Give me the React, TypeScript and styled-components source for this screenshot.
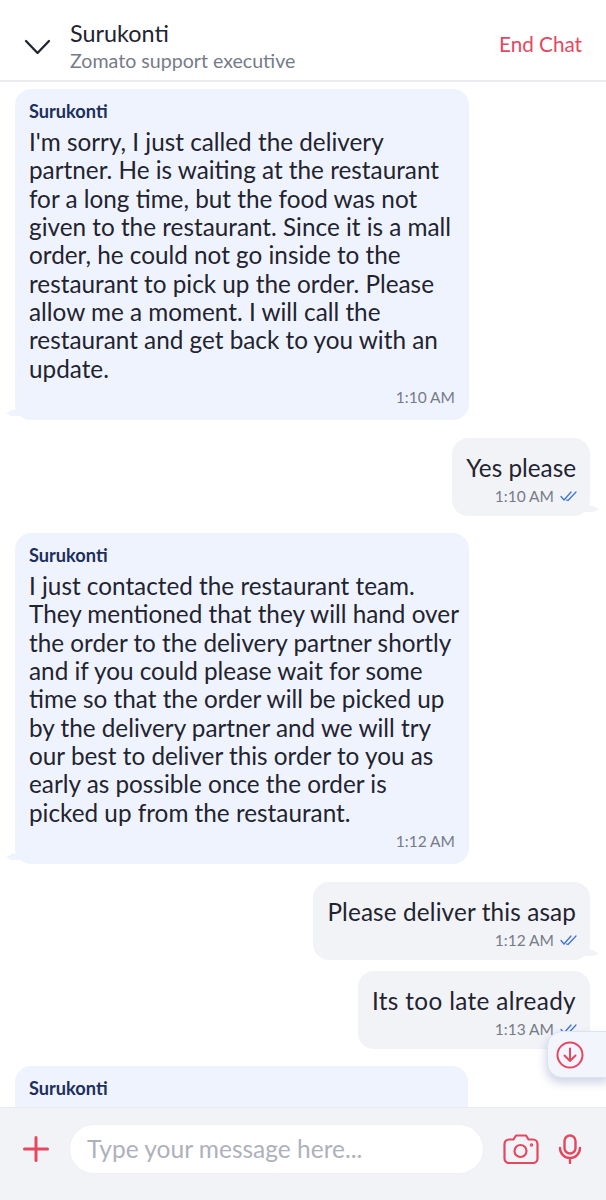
import React from "react";
import styled, { createGlobalStyle } from "styled-components";

const Global = createGlobalStyle`
  html, body { margin: 0; padding: 0; background: #fff; }
  * { box-sizing: border-box; }
`;
const Page = styled.div`
  position: relative; width: 606px; height: 1200px; overflow: hidden; display: flex; flex-direction: column;
  background: #fff; font-family: Lato, "Noto Sans", sans-serif; color: #1f2430;
`;
const Header = styled.header`
  height: 82px; flex: none; display: flex; align-items: center; padding: 0 24px 0 24px; border-bottom: 2px solid #ebecef;
`;
const Back = styled.svg`width: 27px; height: 18px; flex: none; margin-right: 19px; margin-top: 14px;`;
const Titles = styled.div`flex: 1; display: flex; flex-direction: column; gap: 1px; padding-top: 12px;`;
const Title = styled.div`font-size: 23.4px; line-height: 28px; color: #1f2430;`;
const Sub = styled.div`font-size: 19.6px; line-height: 26px; color: #767b8a;`;
const EndChat = styled.div`font-size: 20.7px; color: #e5475f; margin-top: 8px;`;
const Scroll = styled.main`flex: 1; min-height: 0; overflow: hidden; display: flex; flex-direction: column; padding-top: 7px;`;
const Bubble = styled.div<{ $me?: boolean; $gap: number; $w?: number }>`
  position: relative; flex: none;
  align-self: ${p => (p.$me ? "flex-end" : "flex-start")};
  width: ${p => (p.$w ? `${p.$w}px` : "auto")};
  margin: ${p => p.$gap}px ${p => (p.$me ? "16px" : "0")} 0 ${p => (p.$me ? "0" : "15px")};
  padding: ${p => (p.$me ? "16px 14px 10px 14px" : "11px 14px 13px 14px")};
  background: ${p => (p.$me ? "#f2f3f7" : "#eff3fd")};
  border-radius: 16px;
  &::after {
    content: ""; position: absolute; bottom: 4px; width: 14px; height: 8px;
    background: inherit;
    ${p => (p.$me ? "right: -9px; clip-path: polygon(0 0, 60% 30%, 100% 70%, 60% 100%, 0 100%);" : "left: -9px; clip-path: polygon(100% 0, 40% 30%, 0 70%, 40% 100%, 100% 100%);")}
  }
`;
const Tall = styled(Bubble)`min-height: 120px;`;
const Sender = styled.div`font-size: 18.2px; line-height: 22px; font-weight: 700; color: #1c2f5e; margin-bottom: 6px;`;
const Body = styled.div`font-size: 24.3px; line-height: 28.3333px; color: #1f2430; white-space: nowrap;`;
const MeBody = styled(Body)<{ $track?: number }>`line-height: 28px; letter-spacing: ${p => p.$track ?? 0}px;`;
const Meta = styled.div`display: flex; justify-content: flex-end; align-items: center; gap: 6px; font-size: 15.5px; line-height: 20px; color: #767b8a; margin-top: 4px;`;
const MeMeta = styled(Meta)`margin-right: -1px;`;
const Footer = styled.footer`
  height: 93px; flex: none; display: flex; align-items: center; padding: 0 0 11px 23px;
  background: #f2f3f7; border-top: 1px solid #e9ebf0;
`;
const Input = styled.div`
  width: 415px; height: 50px; flex: none; margin: 0 19px 0 20px; padding: 0 17px; border-radius: 25px; background: #fff; border: 1px solid #eef0f4;
  display: flex; align-items: center; font-size: 24.5px; color: #aeb1bc;
`;
const IconBox = styled.svg`flex: none; display: block;`;
const Mic = styled(IconBox)`margin-left: 19px;`;
const ScrollDown = styled.div`
  position: absolute; left: 547px; top: 1031px; width: 62px; height: 47px; border-radius: 15px 0 0 15px;
  background: #f2f5fc; border: 1px solid #dbe3f4; box-shadow: -1px 5px 10px rgba(90,105,160,.28);
  display: flex; align-items: center; padding-left: 8px;
`;

const Ticks = () => (
  <svg width="17" height="12" viewBox="0 0 17 12" fill="none" stroke="#3f74d0" strokeWidth="1.3" strokeLinecap="round" strokeLinejoin="round">
    <path d="M1 6.5 4 10 11 2" /><path d="M6.5 10 8 10.5 16 2" />
  </svg>
);
const msg1 = ["I'm sorry, I just called the delivery", "partner. He is waiting at the restaurant", "for a long time, but the food was not", "given to the restaurant. Since it is a mall", "order, he could not go inside to the", "restaurant to pick up the order. Please", "allow me a moment. I will call the", "restaurant and get back to you with an", "update."];
const msg2 = ["I just contacted the restaurant team.", "They mentioned that they will hand over", "the order to the delivery partner shortly", "and if you could please wait for some", "time so that the order will be picked up", "by the delivery partner and we will try", "our best to deliver this order to you as", "early as possible once the order is", "picked up from the restaurant."];
const Lines = ({ l }: { l: string[] }) => <Body>{l.map((t, i) => <div key={i}>{t}</div>)}</Body>;

export default function App() {
  return (
    <Page>
      <Global />
      <Header>
        <Back viewBox="0 0 27 18" fill="none" stroke="#1f2430" strokeWidth="2.3" strokeLinecap="round" strokeLinejoin="round"><path d="M2 3 13.5 15 25 3" /></Back>
        <Titles><Title>Surukonti</Title><Sub>Zomato support executive</Sub></Titles>
        <EndChat>End Chat</EndChat>
      </Header>
      <Scroll>
        <Bubble $gap={0} $w={454}><Sender>Surukonti</Sender><Lines l={msg1} /><Meta>1:10 AM</Meta></Bubble>
        <Bubble $me $gap={18}><MeBody>Yes please</MeBody><MeMeta>1:10 AM <Ticks /></MeMeta></Bubble>
        <Bubble $gap={17} $w={454}><Sender>Surukonti</Sender><Lines l={msg2} /><Meta>1:12 AM</Meta></Bubble>
        <Bubble $me $gap={18}><MeBody $track={0.13}>Please deliver this asap</MeBody><MeMeta>1:12 AM <Ticks /></MeMeta></Bubble>
        <Bubble $me $gap={11}><MeBody $track={0.36}>Its too late already</MeBody><MeMeta>1:13 AM <Ticks /></MeMeta></Bubble>
        <Tall $gap={17} $w={453}><Sender>Surukonti</Sender></Tall>
      </Scroll>
      <ScrollDown>
        <IconBox width="28" height="28" viewBox="0 0 28 28" fill="none" stroke="#e5475f" strokeWidth="2" strokeLinecap="round" strokeLinejoin="round"><circle cx="14" cy="14" r="12.5" /><path d="M14 7.5v12.5M8.5 14.5 14 20l5.5-5.5" /></IconBox>
      </ScrollDown>
      <Footer>
        <IconBox width="26" height="26" viewBox="0 0 26 26" fill="none" stroke="#e5475f" strokeWidth="3" strokeLinecap="round"><path d="M13 1.5v23M1.5 13h23" /></IconBox>
        <Input>Type your message here...</Input>
        <IconBox width="36" height="30" viewBox="0 0 36 30" fill="none" stroke="#e5475f" strokeWidth="2.2" strokeLinecap="round" strokeLinejoin="round">
          <path d="M6 5.5h4.5L13 1.5h10l2.5 4H30a4.5 4.5 0 0 1 4.5 4.5v14.5A4.5 4.5 0 0 1 30 29H6a4.5 4.5 0 0 1-4.5-4.5V10A4.5 4.5 0 0 1 6 5.5Z" /><circle cx="17.5" cy="17" r="6" /><circle cx="28.5" cy="11" r=".7" />
        </IconBox>
        <Mic width="24" height="30" viewBox="0 0 24 30" fill="none" stroke="#e5475f" strokeWidth="2.4" strokeLinecap="round" strokeLinejoin="round">
          <rect x="6.5" y="1.5" width="11" height="18" rx="5.5" /><path d="M2 14a10 10 0 0 0 20 0M12 24v5" />
        </Mic>
      </Footer>
    </Page>
  );
}
